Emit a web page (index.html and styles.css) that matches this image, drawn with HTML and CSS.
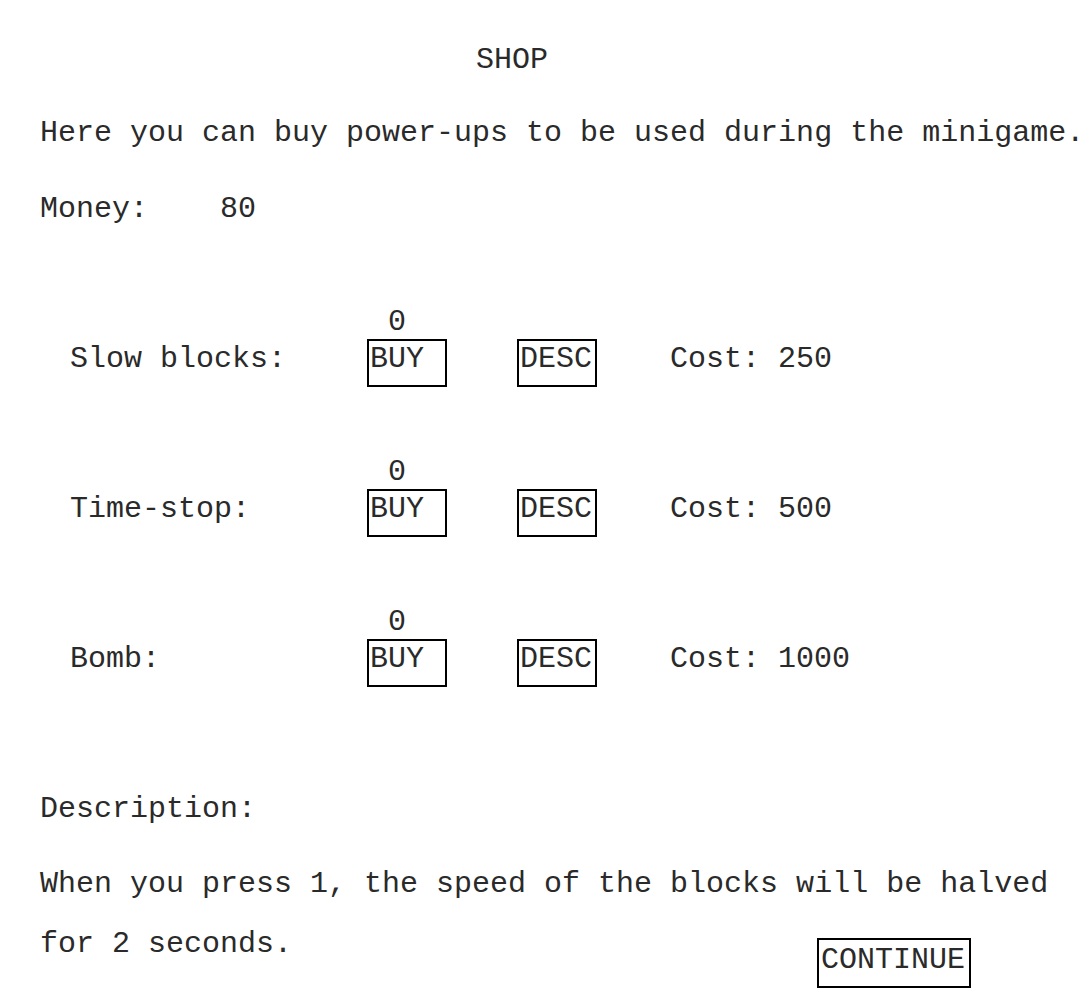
FILE: index.html
```html
<!DOCTYPE html>
<html>
<head>
<meta charset="utf-8">
<link rel="stylesheet" href="styles.css">
</head>
<body>
<div class="page">
  <div class="title">SHOP</div>
  <p class="line intro">Here you can buy power-ups to be used during the minigame.</p>
  <p class="line money">Money:    80</p>

  <div class="items">
    <div class="item">
      <span class="label">Slow blocks:</span>
      <div class="buycell"><span class="count">0</span><button class="btn">BUY</button></div>
      <div class="desccell"><button class="btn">DESC</button></div>
      <span class="cost">Cost: 250</span>
    </div>
    <div class="item">
      <span class="label">Time-stop:</span>
      <div class="buycell"><span class="count">0</span><button class="btn">BUY</button></div>
      <div class="desccell"><button class="btn">DESC</button></div>
      <span class="cost">Cost: 500</span>
    </div>
    <div class="item">
      <span class="label">Bomb:</span>
      <div class="buycell"><span class="count">0</span><button class="btn">BUY</button></div>
      <div class="desccell"><button class="btn">DESC</button></div>
      <span class="cost">Cost: 1000</span>
    </div>
  </div>

  <p class="line desc-title">Description:</p>
  <div class="desc">
    <p class="dline">When you press 1, the speed of the blocks will be halved</p>
    <div class="last">
      <span class="dtext">for 2 seconds.</span>
      <button class="btn continue">CONTINUE</button>
    </div>
  </div>
</div>
</body>
</html>
```

FILE: styles.css
```css
html, body {
  margin: 0;
  padding: 0;
  background: #fff;
}
body {
  font-family: "Liberation Mono", "Courier New", monospace;
  font-size: 30px;
  line-height: 30px;
  color: #2a2a2a;
}
.page {
  padding-top: 45px;
  padding-left: 40px;
  padding-bottom: 8px;
}
.title {
  padding-left: 436px;
  height: 30px;
  margin-bottom: 43px;
}
.line {
  margin: 0;
  height: 30px;
  white-space: pre;
}
.intro {
  margin-bottom: 46px;
}
.money {
  margin-bottom: 83px;
}
.items {
  display: flex;
  flex-direction: column;
  gap: 70px;
  padding-left: 30px;
}
.item {
  display: grid;
  grid-template-columns: 297px 150px 153px auto;
  height: 80px;
  align-items: start;
}
.label, .cost {
  margin-top: 37px;
  white-space: pre;
}
.buycell {
  display: flex;
  flex-direction: column;
}
.count {
  padding-left: 21px;
  height: 30px;
  margin-bottom: 2px;
}
.desccell {
  padding-top: 32px;
}
.btn {
  font-family: "Liberation Mono", "Courier New", monospace;
  font-size: 30px;
  line-height: 30px;
  color: #2a2a2a;
  background: #fff;
  border: 2px solid #000;
  box-sizing: border-box;
  width: 80px;
  height: 48px;
  padding: 3px 0 11px 1px;
  margin: 0;
  text-align: left;
  display: block;
  white-space: pre;
  overflow: visible;
}
.desc-title {
  margin-top: 107px;
}
.desc {
  margin-top: 30px;
}
.dline {
  margin: 0;
  height: 60px;
  line-height: 60px;
  white-space: pre;
}
.last {
  display: flex;
  align-items: flex-start;
  line-height: 60px;
}
.dtext {
  width: 777px;
  white-space: pre;
}
.continue {
  width: 154px;
  height: 50px;
  margin-top: 24px;
  padding: 5px 0 11px 2px;
}
```
